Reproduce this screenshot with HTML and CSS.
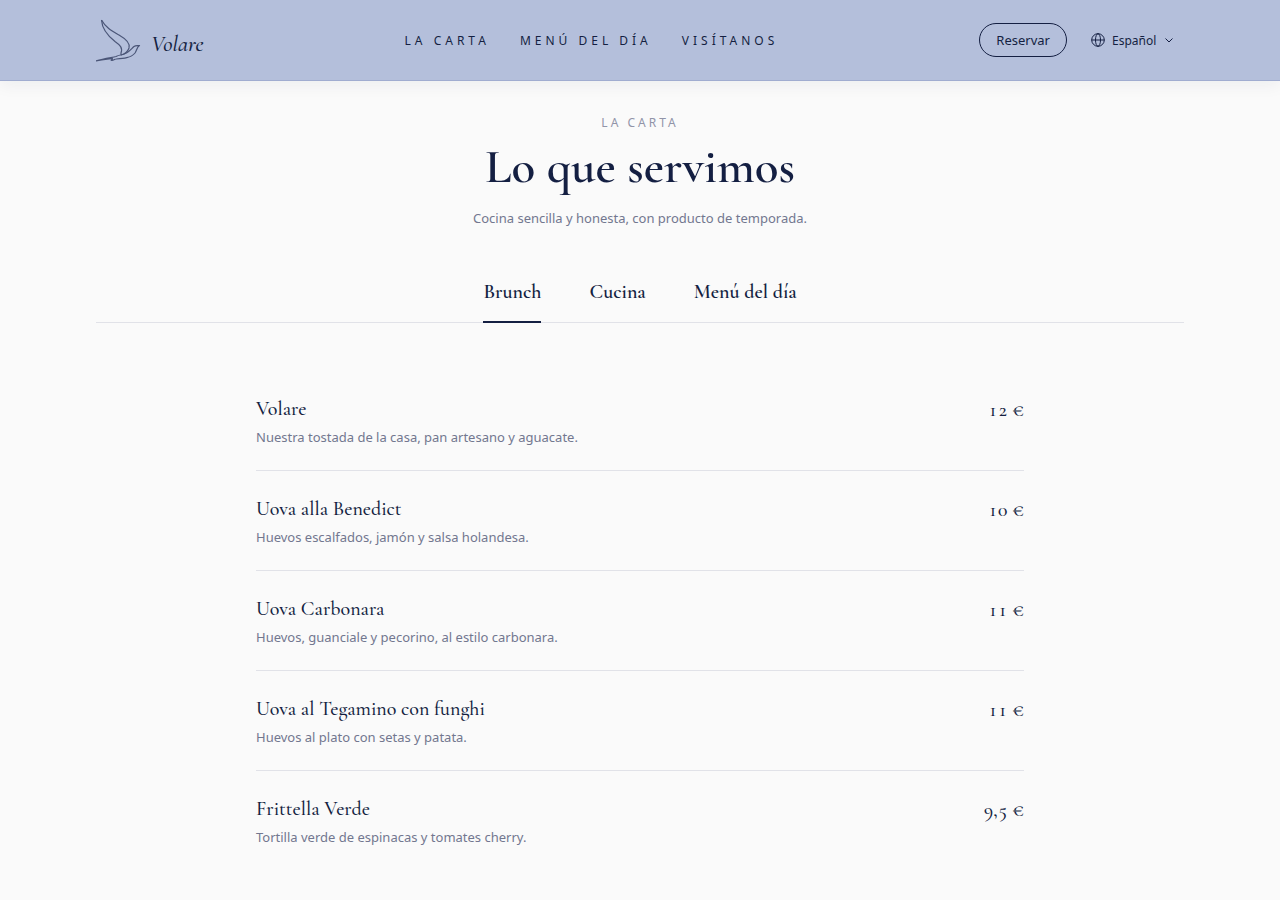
FILE: index.html
```html
<!DOCTYPE html>
<html lang="es">
<head>
  <meta charset="UTF-8">
  <meta name="viewport" content="width=device-width, initial-scale=1">
  <title>Volare</title>
  <link rel="stylesheet" href="styles.css">
</head>
<body>
<header class="site-header">
  <div class="container header-inner">
    <a class="brand" href="#">
      <svg class="brand-bird" viewBox="0 0 46 44" aria-hidden="true">
        <path d="M5.500 2C6 10 12 18 19 23.500C24 27 27 30 25 35L25 37"/>
        <path d="M5.500 2C10 10 16 13 23 17C30 21 34.500 25 33 30C32 33 29 36 25 37"/>
        <path d="M25 37C32 36 35 31 38 28.500C40 27 42 28 43.500 27.500C41 29 41 32 39 35C35 40 27 40.500 20 41C18 41 17 43.500 15 42C18 41 16 39.500 13 41C9 41.500 5 42 0 43C8 40.500 16 39.500 20 38.500C22 37.500 24 37 25 37"/>
      </svg>
      <span class="brand-name">Volare</span>
    </a>
    <nav class="main-nav">
      <a href="#carta">La carta</a>
      <a href="#menu">Menú del día</a>
      <a href="#visitanos">Visítanos</a>
    </nav>
    <div class="actions">
      <button class="reserve" type="button">Reservar</button>
      <label class="lang">
        <svg class="globe" viewBox="0 0 14 14" aria-hidden="true">
          <circle cx="7" cy="7" r="6.3"/>
          <ellipse cx="7" cy="7" rx="2.5" ry="6.3"/>
          <path d="M.7 7h12.6"/>
        </svg>
        <select aria-label="Idioma">
          <option>Español</option>
        </select>
        <svg class="chevron" viewBox="0 0 10 10" aria-hidden="true"><path d="M1.500 3.500L5 7l3.500-3.500"/></svg>
      </label>
    </div>
  </div>
</header>

<main class="container" id="carta">
  <div class="intro">
    <p class="eyebrow">La carta</p>
    <h1>Lo que servimos</h1>
    <p class="lead">Cocina sencilla y honesta, con producto de temporada.</p>
  </div>

  <div class="tabs" role="tablist">
    <button class="tab active" type="button" role="tab" aria-selected="true">Brunch</button>
    <button class="tab" type="button" role="tab" aria-selected="false">Cucina</button>
    <button class="tab" type="button" role="tab" aria-selected="false">Menú del día</button>
  </div>

  <ul class="dishes">
    <li class="dish">
      <div>
        <h2>Volare</h2>
        <p>Nuestra tostada de la casa, pan artesano y aguacate.</p>
      </div>
      <span class="price">12 €</span>
    </li>
    <li class="dish">
      <div>
        <h2>Uova alla Benedict</h2>
        <p>Huevos escalfados, jamón y salsa holandesa.</p>
      </div>
      <span class="price">10 €</span>
    </li>
    <li class="dish">
      <div>
        <h2>Uova Carbonara</h2>
        <p>Huevos, guanciale y pecorino, al estilo carbonara.</p>
      </div>
      <span class="price">11 €</span>
    </li>
    <li class="dish">
      <div>
        <h2>Uova al Tegamino con funghi</h2>
        <p>Huevos al plato con setas y patata.</p>
      </div>
      <span class="price">11 €</span>
    </li>
    <li class="dish">
      <div>
        <h2>Frittella Verde</h2>
        <p>Tortilla verde de espinacas y tomates cherry.</p>
      </div>
      <span class="price">9,5 €</span>
    </li>
  </ul>
</main>
</body>
</html>
```
FILE: styles.css
```css
:root {
  --navy: #141f42;
  --muted: #72778f;
  --line: #e1e2e8;
  --serif: "Cormorant Garamond", "Liberation Serif", serif;
  --sans: "Noto Sans", sans-serif;
}

* { box-sizing: border-box; }

body {
  margin: 0;
  background: #fafafa;
  color: var(--navy);
  font-family: var(--sans);
  font-size: 13px;
}

h1, h2, p, ul { margin: 0; padding: 0; }
a { color: inherit; text-decoration: none; }
button, select {
  font: inherit;
  color: inherit;
  background: none;
  border: 0;
  cursor: pointer;
}
svg { fill: none; stroke: currentColor; }

.container {
  max-width: 1280px;
  margin: 0 auto;
  padding: 0 96px;
}

/* header */
.site-header {
  background: #b4bfdb;
  border-bottom: 1px solid #a0acd0;
  box-shadow: 0 4px 16px rgba(20, 32, 74, 0.06);
}
.header-inner {
  display: flex;
  align-items: center;
  justify-content: space-between;
  height: 80px;
}
.brand {
  display: flex;
  align-items: center;
  gap: 9px;
}
.brand-bird {
  width: 46px;
  height: 44px;
  stroke: #4b5678;
  stroke-width: 1.2;
  stroke-linejoin: round;
}
.brand-name {
  padding-top: 8px;
  font: italic 500 23px/28px var(--serif);
}
.main-nav {
  display: flex;
  gap: 30px;
  font-size: 12px;
  letter-spacing: 4px;
  text-transform: uppercase;
}
.actions {
  display: flex;
  align-items: center;
  gap: 24px;
}
.reserve {
  height: 34px;
  padding: 0 16px;
  border: 1px solid var(--navy);
  border-radius: 17px;
}
.lang {
  display: flex;
  align-items: center;
  gap: 7px;
  padding-right: 10px;
  font-size: 12px;
}
.lang select {
  appearance: none;
  padding: 0;
}
.globe { width: 14px; height: 14px; }
.chevron { width: 10px; height: 10px; }

/* intro */
.intro {
  padding-top: 32px;
  text-align: center;
}
.eyebrow {
  color: #9194a8;
  font-size: 12px;
  line-height: 20px;
  letter-spacing: 3px;
  text-transform: uppercase;
}
.intro h1 {
  margin-top: 6px;
  font: 600 49px/56px var(--serif);
}
.lead {
  margin-top: 13px;
  color: var(--muted);
  line-height: 20px;
}

/* tabs */
.tabs {
  display: flex;
  justify-content: center;
  gap: 48px;
  margin-top: 48px;
  border-bottom: 1px solid var(--line);
}
.tab {
  margin-bottom: -1px;
  padding: 1px 0 14px;
  border-bottom: 2px solid transparent;
  font: 600 20px/30px var(--serif);
}
.tab.active { border-color: var(--navy); }

/* dishes */
.dishes {
  max-width: 768px;
  margin: 48px auto 0;
  list-style: none;
}
.dish {
  display: flex;
  justify-content: space-between;
  gap: 24px;
  padding: 24px 0 23px;
  border-bottom: 1px solid var(--line);
}
.dish:last-child { border-bottom: 0; }
.dish h2 {
  font: 500 20px/28px var(--serif);
}
.dish p {
  margin-top: 4px;
  color: var(--muted);
  line-height: 20px;
}
.price {
  font: 500 20px/30px var(--serif);
  font-variant-numeric: tabular-nums;
  white-space: nowrap;
}
```
